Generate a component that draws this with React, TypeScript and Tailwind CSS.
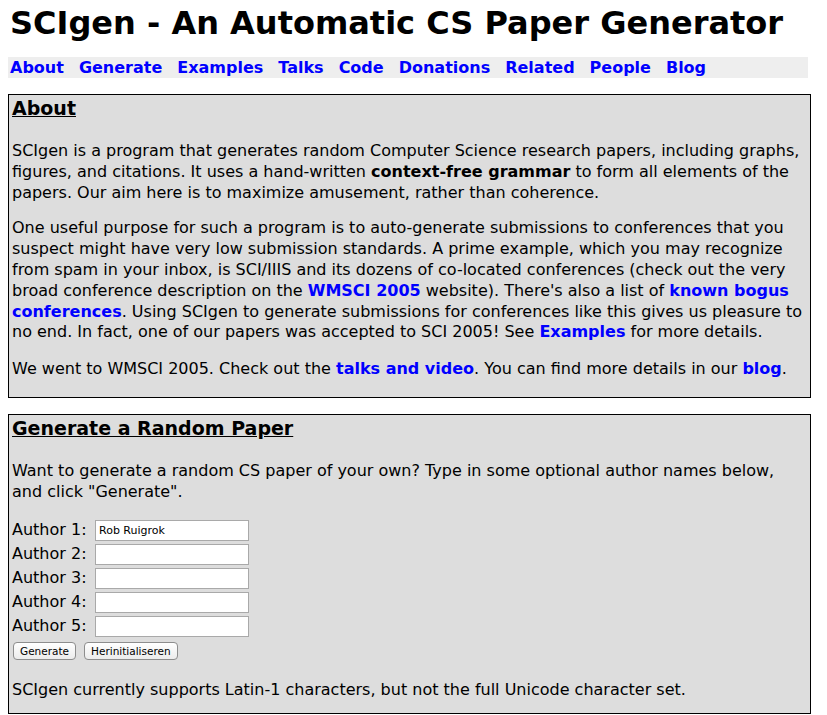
import React from "react";

const font = { fontFamily: '"DejaVu Sans", Verdana, sans-serif' };

function L({ children }: { children: React.ReactNode }) {
  return <a className="font-bold text-[#0000ff] no-underline">{children}</a>;
}

export default function App() {
  return (
    <div className="min-h-[715px] bg-white px-2 pt-[4px] text-black" style={font}>
      <h1 className="text-[32px] font-bold leading-[38px] pl-[2px] m-0">
        SCIgen - An Automatic CS Paper Generator
      </h1>
      <div className="mt-[15px] w-[800px] h-[21px] bg-[#eeeeee] flex items-center gap-[15px] pl-[2px] text-[16px] leading-[21px]">
        <L>About</L>
        <L>Generate</L>
        <L>Examples</L>
        <L>Talks</L>
        <L>Code</L>
        <L>Donations</L>
        <L>Related</L>
        <L>People</L>
        <L>Blog</L>
      </div>

      <div className="mt-[16px] w-[803px] h-[304px] border border-black bg-[#dddddd] px-[3px] pt-[2px] text-[16px] leading-[20.8px]">
        <h2 className="text-[19px] font-bold underline leading-[22px] m-0">About</h2>
        <p className="mt-[22px]">
          SCIgen is a program that generates random Computer Science research papers, including graphs,
          figures, and citations. It uses a hand-written <b>context-free grammar</b> to form all elements of the
          papers. Our aim here is to maximize amusement, rather than coherence.
        </p>
        <p className="mt-[15px]">
          One useful purpose for such a program is to auto-generate submissions to conferences that you
          suspect might have very low submission standards. A prime example, which you may recognize
          from spam in your inbox, is SCI/IIIS and its dozens of co-located conferences (check out the very
          broad conference description on the <L>WMSCI 2005</L> website). There's also a list of{" "}
          <L>known bogus conferences</L>. Using SCIgen to generate submissions for conferences like this gives us pleasure to
          no end. In fact, one of our papers was accepted to SCI 2005! See <L>Examples</L> for more details.
        </p>
        <p className="mt-[16px]">
          We went to WMSCI 2005. Check out the <L>talks and video</L>. You can find more details in our{" "}
          <L>blog</L>.
        </p>
      </div>

      <div className="mt-[16px] w-[803px] h-[300px] border border-black bg-[#dddddd] px-[3px] pt-[2px] text-[16px] leading-[20.8px]">
        <h2 className="text-[19px] font-bold underline leading-[22px] m-0">Generate a Random Paper</h2>
        <p className="mt-[22px]">
          Want to generate a random CS paper of your own? Type in some optional author names below,
          and click "Generate".
        </p>
        <div className="mt-[17px] flex flex-col gap-[3px]">
          {[1, 2, 3, 4, 5].map((n) => (
            <div key={n} className="flex items-center h-[21px]">
              <span className="w-[83px]">Author {n}:</span>
              <input
                className="w-[154px] h-[21px] bg-white border border-[#a9a9a9] px-[3px] text-[11px] outline-none"
                style={{ fontFamily: '"DejaVu Sans", sans-serif' }}
                defaultValue={n === 1 ? "Rob Ruigrok" : ""}
              />
            </div>
          ))}
        </div>
        <div className="mt-[5px] flex gap-[8px] pl-[1px]">
          <button className="h-[18px] px-[6px] rounded-[4px] border border-[#8d8d8d] bg-gradient-to-b from-white to-[#ececec] text-[10.5px] leading-[16px]">
            Generate
          </button>
          <button className="h-[18px] px-[6px] rounded-[4px] border border-[#8d8d8d] bg-gradient-to-b from-white to-[#ececec] text-[10.5px] leading-[16px]">
            Herinitialiseren
          </button>
        </div>
        <p className="mt-[20px]">
          SCIgen currently supports Latin-1 characters, but not the full Unicode character set.
        </p>
      </div>
    </div>
  );
}
